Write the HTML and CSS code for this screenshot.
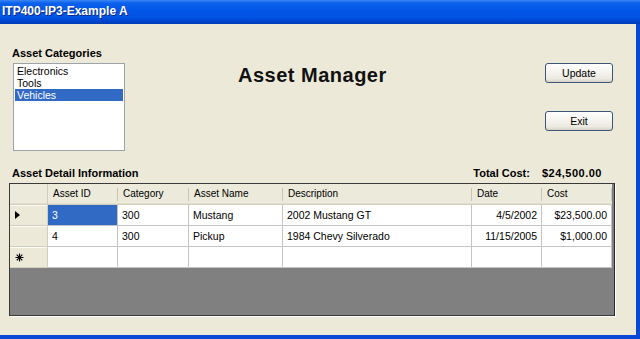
FILE: index.html
```html
<!DOCTYPE html>
<html>
<head>
<meta charset="utf-8">
<link rel="stylesheet" href="styles.css">
</head>
<body>
<div class="window">
  <div class="titlebar"><span class="title">ITP400-IP3-Example A</span></div>
  <div class="client">
    <div class="top">
      <div class="cat">
        <div class="label">Asset Categories</div>
        <div class="listbox">
          <div class="item">Electronics</div>
          <div class="item">Tools</div>
          <div class="item sel">Vehicles</div>
        </div>
      </div>
      <h1 class="heading">Asset Manager</h1>
      <div class="buttons">
        <button class="btn">Update</button>
        <button class="btn">Exit</button>
      </div>
    </div>
    <div class="detailbar">
      <span>Asset Detail Information</span>
      <span class="total"><span>Total Cost:</span><span class="amount">$24,500.00</span></span>
    </div>
    <div class="grid">
      <div class="table">
        <div class="h rhh"></div>
        <div class="h">Asset ID</div>
        <div class="h">Category</div>
        <div class="h">Asset Name</div>
        <div class="h">Description</div>
        <div class="h">Date</div>
        <div class="h">Cost</div>

        <div class="rh"><span class="arrow"></span></div>
        <div class="c selcell">3</div>
        <div class="c">300</div>
        <div class="c">Mustang</div>
        <div class="c">2002 Mustang GT</div>
        <div class="c r">4/5/2002</div>
        <div class="c r">$23,500.00</div>

        <div class="rh"></div>
        <div class="c">4</div>
        <div class="c">300</div>
        <div class="c">Pickup</div>
        <div class="c">1984 Chevy Silverado</div>
        <div class="c r">11/15/2005</div>
        <div class="c r">$1,000.00</div>

        <div class="rh"><svg class="star" width="9" height="9" viewBox="0 0 9 9"><path d="M4.5 0.5V8.5M0.5 4.5H8.5M1.7 1.7L7.3 7.3M7.3 1.7L1.7 7.3" stroke="#000" stroke-width="1.1" fill="none"/></svg></div>
        <div class="c"></div>
        <div class="c"></div>
        <div class="c"></div>
        <div class="c"></div>
        <div class="c"></div>
        <div class="c"></div>
      </div>
    </div>
  </div>
</div>
</body>
</html>
```
FILE: styles.css
```css
html, body {
  margin: 0;
  padding: 0;
}
body {
  width: 640px;
  height: 339px;
  overflow: hidden;
  background: #0848D4;
  font-family: "Liberation Sans", Arial, sans-serif;
  color: #000;
}
.window {
  display: flex;
  flex-direction: column;
  height: 339px;
}
.titlebar {
  height: 24px;
  box-sizing: border-box;
  padding: 0 0 2px 2px;
  display: flex;
  align-items: center;
  background: linear-gradient(#3A86F6 0, #0C62EC 3px, #0257E8 10px, #0253E2 17px, #0046CF 21px, #003CB8 24px);
  color: #fff;
  font-weight: bold;
  font-size: 12px;
  text-shadow: 1px 1px 0 #0A2A8C;
}
.client {
  flex: 1;
  background: #ECE9D8;
  margin: 0 4px 4px 0;
  padding-top: 23px;
  box-sizing: border-box;
}
.top {
  display: flex;
  align-items: flex-start;
  height: 104px;
  padding-right: 23px;
}
.cat {
  margin-left: 12px;
  width: 113px;
}
.label, .detailbar {
  font-weight: bold;
  font-size: 11px;
  line-height: 13px;
}
.listbox {
  margin: 3px 0 0 1px;
  height: 88px;
  box-sizing: border-box;
  border: 1px solid #9DA3AA;
  background: #fff;
  padding: 1px;
}
.item {
  height: 12px;
  line-height: 12px;
  font-size: 10.5px;
  padding-left: 2px;
}
.sel {
  background: #316AC5;
  color: #fff;
}
.heading {
  margin: 17px 0 0 113px;
  font-size: 20px;
  line-height: 23px;
  font-weight: bold;
  letter-spacing: 0.5px;
  color: #111;
}
.buttons {
  margin-left: auto;
  margin-top: 16px;
  display: flex;
  flex-direction: column;
  gap: 28px;
}
.btn {
  width: 68px;
  height: 20px;
  box-sizing: border-box;
  border: 1px solid #3C5677;
  border-radius: 3px;
  background: linear-gradient(#FFFFFF 0, #F6F5F0 40%, #ECEAE2 80%, #D8D3C6 100%);
  font-family: "Liberation Sans", Arial, sans-serif;
  font-size: 10.5px;
  color: #000;
  padding: 0;
}
.detailbar {
  display: flex;
  justify-content: space-between;
  margin-top: 16px;
  padding: 0 34px 0 12px;
}
.total {
  display: flex;
  gap: 12px;
}
.amount {
  letter-spacing: 0.5px;
}
.grid {
  margin: 3px 0 0 9px;
  width: 606px;
  height: 133px;
  box-sizing: border-box;
  border: 1px solid #3A3A3A;
  border-right-color: #2A2A2A;
  background: #808080;
  box-shadow: 1px 1px 0 #fff;
}
.table {
  display: grid;
  grid-template-columns: 38px 70px 71px 94px 189px 70px 70px;
  grid-auto-rows: 21px;
  font-size: 10.5px;
}
.h {
  background: linear-gradient(#C9C5B4, #C9C5B4) right 4px / 1px 13px no-repeat, #EBEADB;
  border-bottom: 1px solid #D2CEBD;
  box-shadow: inset 0 -1px 0 #E2DFD0;
  padding-left: 5px;
  line-height: 20px;
  font-size: 10px;
  box-sizing: border-box;
}
.rhh {
  border-right: 1px solid #D2CEBD;
  background: #EBEADB;
}
.rh {
  background: #ECE9D8;
  border-bottom: 1px solid #D2CEBD;
  border-right: 1px solid #D2CEBD;
  box-shadow: inset 0 1px 0 #FAFAF6;
  box-sizing: border-box;
  display: flex;
  align-items: center;
  padding-left: 5px;
}
.arrow {
  width: 0;
  height: 0;
  border-left: 5px solid #000;
  border-top: 4px solid transparent;
  border-bottom: 4px solid transparent;
}
.star {
  display: block;
}
.c {
  background: #fff;
  border-right: 1px solid #C4C4C4;
  border-bottom: 1px solid #C4C4C4;
  box-sizing: border-box;
  line-height: 20px;
  padding: 0 4px;
  white-space: nowrap;
  overflow: hidden;
}
.r {
  text-align: right;
}
.selcell {
  background: #316AC5;
  color: #fff;
}
```
